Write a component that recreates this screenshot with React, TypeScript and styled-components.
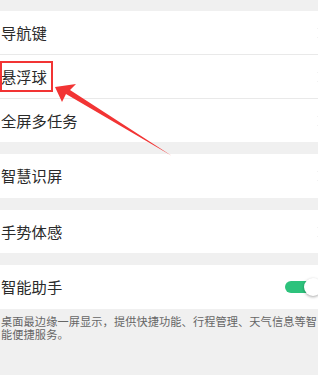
import React from "react";
import styled, { createGlobalStyle } from "styled-components";

const Global = createGlobalStyle`
  html, body { margin: 0; padding: 0; background: #f0f0f0; overflow: hidden; }
  body { font-family: "Noto Sans CJK SC", "Noto Sans", sans-serif; }
`;

const Page = styled.div`
  position: relative;
  width: 318px;
  height: 375px;
  background: #f0f0f0;
  padding-top: 11px;
  box-sizing: border-box;
  overflow: hidden;
`;

const Group = styled.div<{ $gap?: number }>`
  background: #ffffff;
  margin-bottom: ${(p) => p.$gap ?? 12}px;
`;

const Row = styled.div<{ $h?: number; $divider?: boolean }>`
  height: ${(p) => p.$h ?? 43}px;
  display: flex;
  align-items: center;
  justify-content: space-between;
  padding-left: 1px;
  border-bottom: ${(p) => (p.$divider ? "1px solid #e9e9e9" : "none")};
`;

const Label = styled.span`
  font-size: 15.3px;
  color: #2a2a2a;
  line-height: 1;
`;

const Chevron = styled.svg`
  width: 6px;
  height: 12px;
  margin-right: -5px;
  flex: none;
`;

const Toggle = styled.div`
  position: relative;
  width: 36px;
  height: 12px;
  margin-right: -3px;
  flex: none;
`;

const Track = styled.div`
  position: absolute;
  left: 0;
  top: 0;
  width: 30px;
  height: 12px;
  border-radius: 6px;
  background: #2dc27c;
`;

const Knob = styled.div`
  position: absolute;
  left: 19px;
  top: -3px;
  width: 18px;
  height: 18px;
  border-radius: 50%;
  background: #ffffff;
  box-shadow: 0 1px 3px rgba(0, 0, 0, 0.35);
`;

const Note = styled.div`
  padding: 0 0 0 1px;
  font-size: 11.2px;
  letter-spacing: 0.1px;
  line-height: 13px;
  color: #666666;
  white-space: nowrap;
`;

const NoteLine = styled.div``;

const Box = styled.div`
  position: absolute;
  left: 0;
  top: 61px;
  width: 53px;
  height: 31px;
  border: 2.5px solid #f23434;
  box-sizing: border-box;
`;

const ArrowSvg = styled.svg`
  position: absolute;
  left: 0;
  top: 0;
  pointer-events: none;
`;

const Arrow = () => (
  <Chevron viewBox="0 0 6 12">
    <path d="M1 1 L5 6 L1 11" fill="none" stroke="#c8c8c8" strokeWidth="1.2" />
  </Chevron>
);

export default function App() {
  return (
    <>
      <Global />
      <Page>
        <Group>
          <Row $divider>
            <Label>导航键</Label>
            <Arrow />
          </Row>
          <Row $divider>
            <Label>悬浮球</Label>
            <Arrow />
          </Row>
          <Row>
            <Label>全屏多任务</Label>
            <Arrow />
          </Row>
        </Group>
        <Group>
          <Row $h={44}>
            <Label>智慧识屏</Label>
            <Arrow />
          </Row>
        </Group>
        <Group $gap={12}>
          <Row $h={43}>
            <Label>手势体感</Label>
            <Arrow />
          </Row>
        </Group>
        <Group $gap={6}>
          <Row $h={44}>
            <Label>智能助手</Label>
            <Toggle>
              <Track />
              <Knob />
            </Toggle>
          </Row>
        </Group>
        <Note>
          <NoteLine>桌面最边缘一屏显示，提供快捷功能、行程管理、天气信息等智</NoteLine>
          <NoteLine>能便捷服务。</NoteLine>
        </Note>
        <Box />
        <ArrowSvg width="318" height="375" viewBox="0 0 318 375">
          <polygon points="55,87 76,84 70,90 172,156 66,94 62,102" fill="#f23434" />
        </ArrowSvg>
      </Page>
    </>
  );
}
